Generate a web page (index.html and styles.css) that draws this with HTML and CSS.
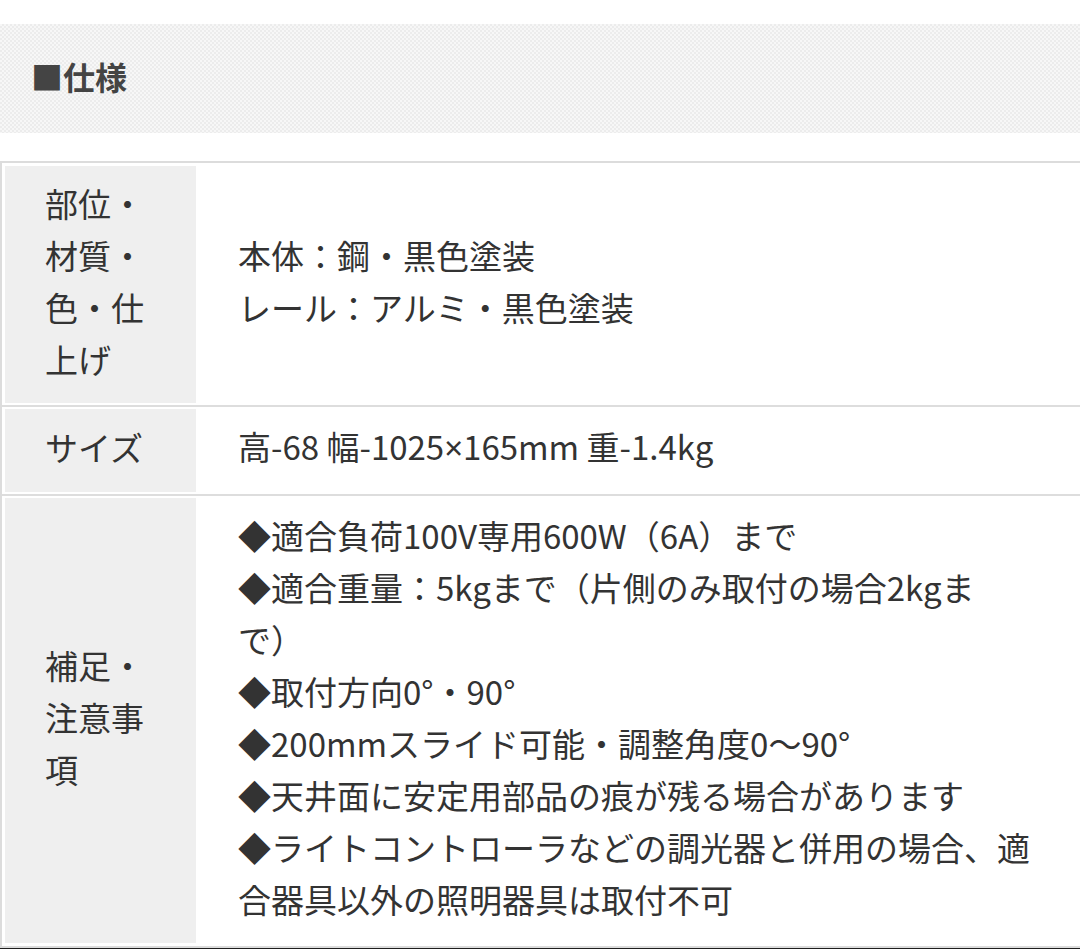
FILE: index.html
```html
<!DOCTYPE html>
<html lang="ja">
<head>
<meta charset="utf-8">
<title>仕様</title>
<link rel="stylesheet" href="styles.css">
</head>
<body>
<div class="page">
  <div class="heading"><h2 class="heading-title">■仕様</h2></div>
  <div class="spec">
    <div class="label">部位・材質・色・仕上げ</div>
    <div class="value">本体：鋼・黒色塗装<br>レール：アルミ・黒色塗装</div>
    <div class="sep"></div>
    <div class="label">サイズ</div>
    <div class="value">高-68 幅-1025<span class="latin">×</span>165mm 重-1.4kg</div>
    <div class="sep"></div>
    <div class="label">補足・注意事項</div>
    <div class="value">◆適合負荷100V専用600W（6A）まで<br>◆適合重量：5kgまで（片側のみ取付の場合2kgまで）<br>◆取付方向0°・90°<br>◆200mmスライド可能・調整角度0〜90°<br>◆天井面に安定用部品の痕が残る場合があります<br>◆ライトコントローラなどの調光器と併用の場合、適合器具以外の照明器具は取付不可</div>
  </div>
  <div class="edge"></div>
</div>
</body>
</html>
```

FILE: styles.css
```css
html, body {
  margin: 0;
  padding: 0;
  background: #ffffff;
}
body {
  font-family: "Noto Sans CJK JP", "Noto Sans", sans-serif;
  color: #333333;
}
.page {
  padding-top: 24px;
}
.heading {
  height: 109px;
  box-sizing: border-box;
  display: flex;
  align-items: center;
  padding-left: 31px;
  padding-bottom: 6px;
  background-color: #f3f3f3;
  background-image: repeating-conic-gradient(#ececec 0 25%, #f7f7f7 0 50%);
  background-size: 4px 4px;
}
.heading-title {
  margin: 0;
  font-size: 32px;
  font-weight: 700;
  color: #444444;
  line-height: 1;
}
.spec {
  margin-top: 28px;
  width: 1072px;
  border: 2px solid #dcdcdc;
  padding: 3px;
  display: grid;
  grid-template-columns: 191px 1fr;
  column-gap: 3px;
  font-size: 33px;
  line-height: 52px;
}
.label {
  background: #efefef;
  padding: 11px 40px 18px 40px;
  display: flex;
  align-items: center;
}
.value {
  background: #ffffff;
  padding: 11px 37px 18px 39px;
  align-self: center;
}
.latin {
  font-family: "Noto Sans", sans-serif;
}
.sep {
  grid-column: 1 / -1;
  height: 2px;
  background: #dddddd;
  margin: 2px -3px;
}
.edge {
  height: 4px;
  background: #1e1e1e;
}
```
